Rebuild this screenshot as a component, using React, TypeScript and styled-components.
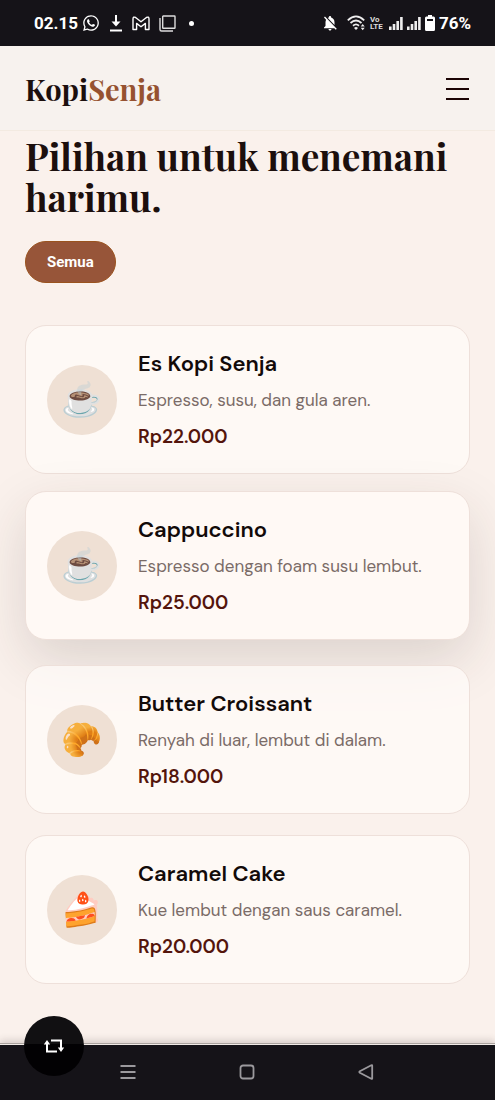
import React from "react";
import styled, { createGlobalStyle } from "styled-components";
import { FaWhatsapp } from "react-icons/fa";
import { MdNotificationsOff } from "react-icons/md";

const GlobalStyle = createGlobalStyle`
  *, *::before, *::after { box-sizing: border-box; }
  body {
    margin: 0;
    background: #faf1ec;
    color: #1c0f0d;
    font-family: "DM Sans", Inter, "Liberation Sans", sans-serif;
  }
  h1, h2, p, ul { margin: 0; padding: 0; }
`;

const Page = styled.div`
  display: flex;
  flex-direction: column;
  min-height: 100vh;
`;

const StatusBar = styled.div`
  display: flex;
  align-items: center;
  justify-content: space-between;
  height: 46px;
  padding: 0 24px 0 34px;
  background: #151318;
  color: #fff;
  font: 700 17px/20px Roboto, sans-serif;
`;

const StatusGroup = styled.div<{ $gap: number }>`
  display: flex;
  align-items: center;
  gap: ${(p) => p.$gap}px;
  svg { display: block; }
`;

const Dot = styled.span`
  width: 5px;
  height: 5px;
  margin-left: 4px;
  border-radius: 50%;
  background: #fff;
`;

const Header = styled.header`
  display: flex;
  align-items: center;
  justify-content: space-between;
  height: 85px;
  padding: 2px 26px 0 25px;
  background: #f7f2ee;
  border-bottom: 1px solid #f3eae1;
`;

const Logo = styled.a`
  color: #1c0f0d;
  font: 700 29px/40px "Playfair Display", "Liberation Serif", serif;
  text-decoration: none;
`;

const LogoAccent = styled.span`
  color: #965230;
`;

const MenuButton = styled.button`
  display: flex;
  flex-direction: column;
  gap: 8px;
  padding: 0;
  border: 0;
  background: none;
`;

const MenuLine = styled.span`
  width: 23px;
  height: 2px;
  background: #1c0505;
`;

const Main = styled.main`
  display: flex;
  flex: 1;
  flex-direction: column;
  align-items: flex-start;
  padding: 4px 25px 56px;
`;

const Title = styled.h1`
  font: 700 37px/41px "Playfair Display", "Liberation Serif", serif;
`;

const FilterButton = styled.button`
  height: 42px;
  margin: 24px 0 42px;
  padding: 0 21px;
  border: 1px solid #9a531f;
  border-radius: 21px;
  background: #975539;
  color: #fff;
  font: 700 15px/20px Roboto, sans-serif;
`;

const MenuList = styled.ul`
  display: flex;
  flex-direction: column;
  gap: 21px;
  width: 100%;
  list-style: none;
`;

const Card = styled.li<{ $raised?: boolean }>`
  position: relative;
  display: flex;
  align-items: center;
  gap: 21px;
  min-height: 149px;
  padding: 20px 21px;
  border: 1px solid #eee0da;
  border-radius: 21px;
  background: rgba(255, 251, 248, 0.75);
  ${(p) =>
    p.$raised &&
    `
    background: #fff9f5;
    transform: translateY(-4px);
    box-shadow: 0 20px 54px rgba(55, 38, 32, 0.15);
  `}
`;

const Thumb = styled.div`
  display: grid;
  flex: none;
  place-items: center;
  width: 70px;
  height: 70px;
  border-radius: 50%;
  background: #efe0d4;
  font: 33px/36px "Noto Color Emoji", sans-serif;
`;

const Info = styled.div`
  display: flex;
  flex-direction: column;
  gap: 8px;
  min-width: 0;
  padding-top: 1px;
`;

const Name = styled.h2`
  color: #120a09;
  font-size: 22px;
  font-weight: 600;
  line-height: 30px;
`;

const Description = styled.p`
  color: #7a6b67;
  font-size: 17px;
  line-height: 27px;
`;

const Price = styled.p`
  color: #54150c;
  font-size: 19px;
  font-weight: 600;
  line-height: 30px;
`;

const BottomBar = styled.nav`
  position: relative;
  display: grid;
  grid-template-columns: repeat(3, 24px);
  justify-content: center;
  align-items: center;
  column-gap: 95px;
  height: 57px;
  padding-right: 2px;
  border-top: 1px solid #aaa39f;
  background: #151318;
  box-shadow: inset 0 1px #f1ebe7, 0 -3px 7px rgba(50, 40, 35, 0.16);
`;

const NavButton = styled.button`
  display: grid;
  place-items: center;
  height: 24px;
  padding: 0;
  border: 0;
  background: none;
  color: #9b999d;
`;

const FloatingButton = styled.button`
  position: absolute;
  left: 24px;
  bottom: 24px;
  display: grid;
  place-items: center;
  width: 60px;
  height: 60px;
  padding: 0;
  border: 0;
  border-radius: 50%;
  background: linear-gradient(#111012 0 28px, #020103 28px);
`;

function DownloadIcon() {
  return (
    <svg width="14" height="18" viewBox="0 0 14 18" fill="none" stroke="#fff" strokeWidth="2">
      <path d="M7 1v10M1 16.5h12" />
      <path d="M2.5 7.5h9L7 12.5Z" fill="#fff" stroke="none" />
    </svg>
  );
}

function MailIcon() {
  return (
    <svg width="18" height="15" viewBox="0 0 18 15" fill="none" stroke="#fff" strokeWidth="1.4" strokeLinejoin="round">
      <path d="M1 13.5V3Q1 .2 3.6 1.5L9 5.8l5.4-4.3Q17 .2 17 3v10.5h-3.6V7.4L9 10.8 4.6 7.4v6.1Z" />
    </svg>
  );
}

function CopyIcon() {
  return (
    <svg width="17" height="17" viewBox="0 0 17 17" fill="none" stroke="#ddd" strokeWidth="1.4">
      <rect x="3.7" y="1" width="12.3" height="12.3" rx=".5" />
      <path d="M1 3v11.5Q1 16 2.5 16H14" />
    </svg>
  );
}

function WifiIcon() {
  return (
    <svg width="19" height="16" viewBox="0 0 19 16" fill="none" stroke="#eee" strokeWidth="1.8">
      <path d="M.8 5.3Q9-2.5 17.2 5.3M3.5 8Q9 3 14.5 8M6 10.7q3-2.6 6 0" />
      <path d="m9 15-2-2q2-1.8 4 0Z" fill="#eee" stroke="none" />
      <path d="m13.7 11.6 2-2.5 2 2.5ZM13.7 12.8l2 2.5 2-2.5Z" fill="#eee" stroke="none" />
    </svg>
  );
}

const VolteMark = styled.span`
  display: flex;
  flex-direction: column;
  width: 15px;
  color: #ddd;
  font: 700 8px/7px Roboto, sans-serif;
`;

function SignalIcon() {
  return (
    <svg width="14" height="13" viewBox="0 0 14 13" fill="#eee">
      <path d="M0 9.5h2.6V13H0zM3.7 7h2.6v6H3.7zM7.4 4H10v9H7.4zM11.1 0h2.6v13h-2.6z" />
    </svg>
  );
}

function BatteryIcon() {
  return (
    <svg width="10" height="16" viewBox="0 0 10 16">
      <path d="M3 0h4v1.5h1.6Q10 1.5 10 3v11.5Q10 16 8.6 16H1.4Q0 16 0 14.5V3q0-1.5 1.4-1.5H3Z" fill="#fff" />
      <path d="M2 4h6v2H2z" fill="#151318" />
    </svg>
  );
}

const items = [
  { name: "Es Kopi Senja", description: "Espresso, susu, dan gula aren.", price: "Rp22.000", emoji: "☕" },
  { name: "Cappuccino", description: "Espresso dengan foam susu lembut.", price: "Rp25.000", emoji: "☕", raised: true },
  { name: "Butter Croissant", description: "Renyah di luar, lembut di dalam.", price: "Rp18.000", emoji: "🥐" },
  { name: "Caramel Cake", description: "Kue lembut dengan saus caramel.", price: "Rp20.000", emoji: "🍰" },
];

export default function App() {
  return (
    <Page>
      <GlobalStyle />
      <StatusBar>
        <StatusGroup $gap={9}>
          <StatusGroup $gap={4}>
            <span>02.15</span>
            <FaWhatsapp size={18} />
          </StatusGroup>
          <DownloadIcon />
          <MailIcon />
          <CopyIcon />
          <Dot />
        </StatusGroup>
        <StatusGroup $gap={8}>
          <MdNotificationsOff size={18} />
          <StatusGroup $gap={4}>
            <WifiIcon />
            <VolteMark>
              <span>Vo</span>
              <span>LTE</span>
            </VolteMark>
            <SignalIcon />
            <SignalIcon />
            <BatteryIcon />
            <span>76%</span>
          </StatusGroup>
        </StatusGroup>
      </StatusBar>
      <Header>
        <Logo href="#">
          Kopi<LogoAccent>Senja</LogoAccent>
        </Logo>
        <MenuButton aria-label="Menu">
          <MenuLine />
          <MenuLine />
          <MenuLine />
        </MenuButton>
      </Header>
      <Main>
        <Title>Pilihan untuk menemani harimu.</Title>
        <FilterButton>Semua</FilterButton>
        <MenuList>
          {items.map(({ name, description, price, emoji, raised }) => (
            <Card key={name} $raised={raised}>
              <Thumb>{emoji}</Thumb>
              <Info>
                <Name>{name}</Name>
                <Description>{description}</Description>
                <Price>{price}</Price>
              </Info>
            </Card>
          ))}
        </MenuList>
      </Main>
      <BottomBar>
        <NavButton aria-label="Recent">
          <svg width="16" height="16" viewBox="0 0 16 16" stroke="currentColor" strokeWidth="1.8">
            <path d="M.5 2h15M.5 8h15M.5 14h15" />
          </svg>
        </NavButton>
        <NavButton aria-label="Home">
          <svg width="16" height="16" viewBox="0 0 16 16" fill="none" stroke="currentColor" strokeWidth="1.8">
            <rect x="1.5" y="1.5" width="13" height="13" rx="2.5" />
          </svg>
        </NavButton>
        <NavButton aria-label="Back">
          <svg width="16" height="16" viewBox="0 0 16 16" fill="none" stroke="currentColor" strokeWidth="1.8" strokeLinejoin="round">
            <path d="M14.2 1.6v12.8q0 .8-.9.4L1.8 8.7q-1-.7 0-1.4l11.5-6.1q.9-.4.9.4Z" />
          </svg>
        </NavButton>
        <FloatingButton aria-label="Switch">
          <svg width="22" height="14" viewBox="0 0 22 14" fill="none" stroke="#fff" strokeWidth="2">
            <path d="M8 1.5h10v8M14 12.5H4v-8" />
            <path d="M.8 5.5 4 1l3.2 4.5ZM14.8 8.5 18 13l3.2-4.5Z" fill="#fff" stroke="none" />
          </svg>
        </FloatingButton>
      </BottomBar>
    </Page>
  );
}
